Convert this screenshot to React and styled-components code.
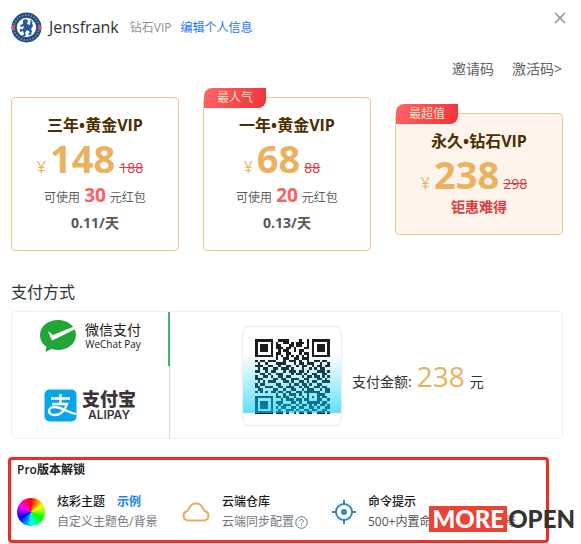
import React, { useState } from "react";
import styled, { createGlobalStyle } from "styled-components";

const GlobalStyle = createGlobalStyle`
  * {
    box-sizing: border-box;
  }

  body {
    margin: 0;
    background: #fff;
    color: #303133;
    font-family: "Open Sans", "Noto Sans CJK SC", sans-serif;
    font-size: 14px;
  }

  button {
    padding: 0;
    border: 0;
    background: none;
    color: inherit;
    font: inherit;
    cursor: pointer;
  }

  a {
    text-decoration: none;
  }
`;

const Dialog = styled.main`
  padding: 9px 18px 1px 11px;
`;

const Header = styled.header`
  display: flex;
  align-items: center;
  height: 36px;

  svg {
    display: block;
  }
`;

const UserName = styled.h1`
  margin: 0 11px 0 7px;
  font-size: 16px;
  font-weight: 400;
  color: #303133;
`;

const UserLevel = styled.span`
  margin-right: 9px;
  font-size: 12px;
  color: #909399;
`;

const EditLink = styled.a`
  font-size: 12px;
  color: #1677ff;
`;

const CloseButton = styled.button`
  align-self: flex-start;
  margin: 2px -4px 0 auto;
`;

const Codes = styled.nav`
  display: flex;
  justify-content: flex-end;
  gap: 18px;
  margin-top: 12px;
  padding-right: 1px;
  line-height: 24px;

  a {
    color: #606266;
  }
`;

const Plans = styled.section`
  display: grid;
  grid-template-columns: repeat(3, 1fr);
  align-items: center;
  gap: 24px;
  margin-top: 16px;
`;

const PlanCard = styled.button`
  && {
    position: relative;
    display: flex;
    flex-direction: column;
    align-items: center;
    padding: 15px 0;
    border: 1px solid #edc98c;
    border-radius: 4px;
    background: ${(props) => (props.$active ? "#fff4eb" : "#fff")};
  }
`;

const Badge = styled.span`
  position: absolute;
  top: -10px;
  left: 0;
  padding: 0 13px;
  border-radius: 8px 0 8px 0;
  background: linear-gradient(120deg, #ff686b, #ee3136);
  color: #ffe4c4;
  font-size: 12px;
  line-height: 20px;
`;

const PlanName = styled.strong`
  font-size: 16px;
  font-weight: 700;
  line-height: 24px;
  color: #4d2f00;
`;

const PriceRow = styled.span`
  display: flex;
  align-items: baseline;
  gap: 4px;
  height: 42px;
  padding-right: 10px;
  line-height: 20px;
  color: #e9b160;

  strong {
    font-size: 38px;
    font-weight: 700;
    line-height: 42px;
  }

  del {
    color: #e0393e;
  }
`;

const Currency = styled.span`
  font-size: 16px;
`;

const Coupon = styled.span`
  display: flex;
  align-items: baseline;
  gap: 4px;
  height: 32px;
  font-size: 12px;
  line-height: 20px;
  color: #5c5e62;

  strong {
    font-size: 19px;
    font-weight: 700;
    line-height: 32px;
    color: #f56267;
  }
`;

const PlanNote = styled.span`
  font-weight: 700;
  line-height: 24px;
  color: ${(props) => (props.$hot ? "#dc3a40" : "#58595c")};
`;

const SectionTitle = styled.h2`
  margin: 29px 0 7px;
  font-size: 16px;
  font-weight: 400;
  line-height: 24px;
`;

const PayPanel = styled.section`
  display: flex;
  border: 1px solid #f0f0f2;
  border-radius: 4px;
`;

const PayTabs = styled.div`
  display: flex;
  flex: none;
  flex-direction: column;
  gap: 15px;
  width: 158px;
  border-right: 1px solid #d4d6da;
`;

const PayTab = styled.button`
  && {
    display: flex;
    align-items: center;
    justify-content: center;
    gap: ${(props) => (props.$wide ? "8px" : "5px")};
    height: 54px;
    margin-right: -1px;
    padding-bottom: 6px;
    border-right: 2px solid ${(props) => (props.$active ? "#3eb370" : "transparent")};
  }
`;

const Brand = styled.span`
  display: flex;
  flex-direction: column;
  font-size: 14px;
  line-height: 16px;
  color: #231815;

  small {
    font-size: 10px;
    line-height: 13px;
  }
`;

const AlipayBrand = styled(Brand)`
  align-items: center;
  font-size: 18px;
  font-weight: 900;
  line-height: 19px;
  color: #3a3637;

  small {
    font-family: Inter, sans-serif;
    font-weight: 600;
    font-size: 12px;
    line-height: 12px;
  }
`;

const Checkout = styled.div`
  display: flex;
  flex: 1;
  align-items: center;
  gap: 10px;
  padding: 14px 0 12px 72px;
`;

const QrFrame = styled.div`
  position: relative;
  display: flex;
  justify-content: center;
  width: 100px;
  height: 100px;
  padding-top: 12px;
  border: 1px solid #ececf0;
  border-radius: 8px;
`;

const ScanLight = styled.div`
  position: absolute;
  inset: 27px 0 12px;
  background: linear-gradient(rgba(0, 205, 250, 0), rgba(0, 205, 250, 0.62));
`;

const Amount = styled.p`
  display: flex;
  align-items: baseline;
  gap: 5px;
  margin: 0;
  padding-top: 5px;
  line-height: 32px;

  strong {
    font-size: 28px;
    font-weight: 400;
    color: #e9b160;
  }
`;

const ProBox = styled.section`
  margin: 18px 14px 0 -3px;
  padding: 1px 6px 8px;
  border: 3px solid #f02b20;
  border-radius: 4px;
`;

const ProTitle = styled.h3`
  margin: 0;
  font-size: 12px;
  font-weight: 600;
  line-height: 18px;
  color: #202124;
`;

const Features = styled.div`
  display: grid;
  grid-template-columns: 165px 150px 1fr;
  margin-top: 13px;
`;

const Feature = styled.article`
  display: flex;
  align-items: center;
  gap: 12px;
  white-space: nowrap;

  svg {
    flex: none;
  }
`;

const FeatureText = styled.div`
  font-size: 12px;
  line-height: 20px;
`;

const FeatureName = styled.div`
  display: flex;
  gap: 12px;
  font-weight: 500;
  color: #17181a;

  a {
    font-weight: 600;
    color: #2080f0;
  }
`;

const FeatureInfo = styled.div`
  display: flex;
  align-items: center;
  gap: 1px;
  color: ${(props) => (props.$dark ? "#505256" : "#73767f")};
`;

const ColorWheel = styled.span`
  flex: none;
  width: 28px;
  height: 28px;
  border-radius: 50%;
  background: conic-gradient(from 0deg, #f00, #ff0, #0f0, #0ff, #00f, #f0f, #f00);
`;

const Watermark = styled.div`
  position: absolute;
  right: 6px;
  top: 506px;
  display: flex;
  gap: 1px;
  font-family: Lato, sans-serif;
  font-size: 24px;
  font-weight: 900;
  line-height: 26px;
  color: #333436;

  span {
    padding: 0 3px;
    background: #ea4335;
    color: #fff;
  }
`;

const plans = [
  { name: "三年•黄金VIP", price: 148, was: 188, coupon: 30, note: "0.11/天" },
  { name: "一年•黄金VIP", price: 68, was: 88, coupon: 20, note: "0.13/天", badge: "最人气" },
  { name: "永久•钻石VIP", price: 238, was: 298, note: "钜惠难得", badge: "最超值" },
];

const qrRows = [
  "11111110011110000100101111111",
  "10000010100110101110101000001",
  "10111010110001101100101011101",
  "10111010111011010001101011101",
  "10111010010110010110001011101",
  "10000010110011000101101000001",
  "11111110101010101010101111111",
  "00000000100110011011100000000",
  "10110111000101110100100110110",
  "01001000111100010110111001001",
  "11100110010011001011001011011",
  "01011001101110100010010101100",
  "11001011000101110110100011101",
  "00110100111000101101001100110",
  "10011010011011000010110110101",
  "11100001101100111001100011010",
  "01010111000110100110101100111",
  "10110000110001011011010011000",
  "11001110011011100101100110110",
  "01100001100100110010111001011",
  "10101011011011001101111110011",
  "00000000100101110100100011100",
  "11111110110110010010101010110",
  "10000010001011101101100011001",
  "10111010111000110100111110110",
  "10111010010111001011010101101",
  "10111010101100110110011010011",
  "10000010010011101001101100110",
  "11111110111010010110110011101",
];

const QrCode = () => (
  <svg width="75" height="75" viewBox="0 0 29 29" shapeRendering="crispEdges" role="img">
    {qrRows.map((row, y) =>
      [...row].map((cell, x) =>
        cell === "1" ? <rect key={`${x}-${y}`} x={x} y={y} width="1" height="1" fill="#1c1c1e" /> : null
      )
    )}
  </svg>
);

const Avatar = () => (
  <svg width="31" height="31" viewBox="0 0 31 31">
    <circle cx="15.5" cy="15.5" r="15" fill="#214a7e" />
    <circle cx="15.5" cy="15.5" r="12.5" fill="none" stroke="#d5dce5" strokeWidth="2" strokeDasharray="1.4 1.6" opacity=".45" />
    <path d="M1 13h3v5H1zM27 13h3v5h-3z" fill="#c95563" />
    <circle cx="15.5" cy="15.5" r="9.7" fill="#fff" />
    <path
      d="M12 8l3-1 2 2-1 3 3 1 1-3 2-1-1 2 1 3-2 3 1 2-1 4h-3l2-3-3-2-2 3 1 3h-4l2-2-1-3-3 1v-2l3-1 1-3-3 1-1-2 3-1z"
      fill="#24599a"
    />
    <path d="M20 8v7M9 17l2 2" stroke="#24599a" strokeWidth="1.3" />
  </svg>
);

const WechatIcon = () => (
  <svg width="38" height="34" viewBox="0 0 38 34">
    <path
      d="M19 1C8.800 1 1 7.600 1 16c0 5 2.400 9 6.400 11.800L6.500 33l5.800-3c2.100.7 4.300 1 6.700 1 10.200 0 18-6.700 18-15S29.200 1 19 1z"
      fill="#22a638"
    />
    <path d="M9 12l5 4L35 7.500 36.500 10 14.300 21c-1 .5-1.600.2-2-.7z" fill="#fff" />
  </svg>
);

const AlipayIcon = () => (
  <svg width="33" height="33" viewBox="0 0 33 33">
    <rect width="32" height="32" x=".5" y=".5" rx="5" fill="#08a5e8" />
    <path
      d="M7 9.500h19M16.500 5v10M8 15h15c-1.500 4.500-5.500 11-11.500 11-4 0-6.500-1.500-6.500-4s2.500-4 5.500-4C17 18 23 23 32 25"
      fill="none"
      stroke="#fff"
      strokeWidth="2.300"
    />
  </svg>
);

const CloudIcon = () => (
  <svg width="28" height="20" viewBox="0 0 28 20" fill="none" stroke="#e6ad5c" strokeWidth="2">
    <path d="M6 18.500a4.800 4.800 0 0 1-1.300-9.300c1.300-.5 1.700-1.200 2.300-2.600C8.200 3.300 10.800 1.500 14 1.500s5.800 1.800 7 5.100c.6 1.400 1 2.100 2.300 2.600A4.800 4.800 0 0 1 22 18.500z" />
  </svg>
);

const TargetIcon = () => (
  <svg width="24" height="24" viewBox="0 0 24 24" fill="none" stroke="#3385c6" strokeWidth="2">
    <circle cx="12" cy="12" r="8" />
    <path d="M12 0v5M12 19v5M0 12h5M19 12h5" />
    <circle cx="12" cy="12" r="3" fill="#3385c6" stroke="none" />
  </svg>
);

const HelpIcon = () => (
  <svg width="13" height="13" viewBox="0 0 13 13" fill="none" stroke="#73767f">
    <circle cx="6.500" cy="6.500" r="5.800" />
    <path d="M4.700 5.300c0-2.600 3.700-2.300 3.700-.2 0 1.300-1.900 1.300-1.900 2.800M6.500 8.800v1" />
  </svg>
);

const App = () => {
  const [plan, setPlan] = useState(2);
  const [method, setMethod] = useState("wechat");

  return (
    <>
      <GlobalStyle />
      <Dialog>
        <Header>
          <Avatar />
          <UserName>Jensfrank</UserName>
          <UserLevel>钻石VIP</UserLevel>
          <EditLink href="#profile">编辑个人信息</EditLink>
          <CloseButton aria-label="关闭">
            <svg width="14" height="14" viewBox="0 0 14 14" stroke="#85878c" strokeWidth="1.200">
              <path d="M2 2l10 10M12 2L2 12" />
            </svg>
          </CloseButton>
        </Header>
        <Codes>
          <a href="#invite">邀请码</a>
          <a href="#activate">激活码&gt;</a>
        </Codes>

        <Plans>
          {plans.map((item, index) => (
            <PlanCard key={item.name} $active={plan === index} onClick={() => setPlan(index)}>
              {item.badge && <Badge>{item.badge}</Badge>}
              <PlanName>{item.name}</PlanName>
              <PriceRow>
                <Currency>¥</Currency>
                <strong>{item.price}</strong>
                <del>{item.was}</del>
              </PriceRow>
              {item.coupon && (
                <Coupon>
                  可使用<strong>{item.coupon}</strong>元红包
                </Coupon>
              )}
              <PlanNote $hot={!item.coupon}>{item.note}</PlanNote>
            </PlanCard>
          ))}
        </Plans>

        <SectionTitle>支付方式</SectionTitle>
        <PayPanel>
          <PayTabs>
            <PayTab $wide $active={method === "wechat"} onClick={() => setMethod("wechat")}>
              <WechatIcon />
              <Brand>
                微信支付
                <small>WeChat Pay</small>
              </Brand>
            </PayTab>
            <PayTab $active={method === "alipay"} onClick={() => setMethod("alipay")}>
              <AlipayIcon />
              <AlipayBrand>
                支付宝
                <small>ALIPAY</small>
              </AlipayBrand>
            </PayTab>
          </PayTabs>
          <Checkout>
            <QrFrame>
              <QrCode />
              <ScanLight />
            </QrFrame>
            <Amount>
              支付金额: <strong>{plans[plan].price}</strong> 元
            </Amount>
          </Checkout>
        </PayPanel>

        <ProBox>
          <ProTitle>Pro版本解锁</ProTitle>
          <Features>
            <Feature>
              <ColorWheel />
              <FeatureText>
                <FeatureName>
                  炫彩主题 <a href="#demo">示例</a>
                </FeatureName>
                <FeatureInfo>自定义主题色/背景</FeatureInfo>
              </FeatureText>
            </Feature>
            <Feature>
              <CloudIcon />
              <FeatureText>
                <FeatureName>云端仓库</FeatureName>
                <FeatureInfo>
                  云端同步配置
                  <HelpIcon />
                </FeatureInfo>
              </FeatureText>
            </Feature>
            <Feature>
              <TargetIcon />
              <FeatureText>
                <FeatureName>命令提示</FeatureName>
                <FeatureInfo $dark>500+内置命令提示及其解释</FeatureInfo>
              </FeatureText>
            </Feature>
          </Features>
        </ProBox>
      </Dialog>
      <Watermark>
        <span>MORE</span>OPEN
      </Watermark>
    </>
  );
};

export default App;
